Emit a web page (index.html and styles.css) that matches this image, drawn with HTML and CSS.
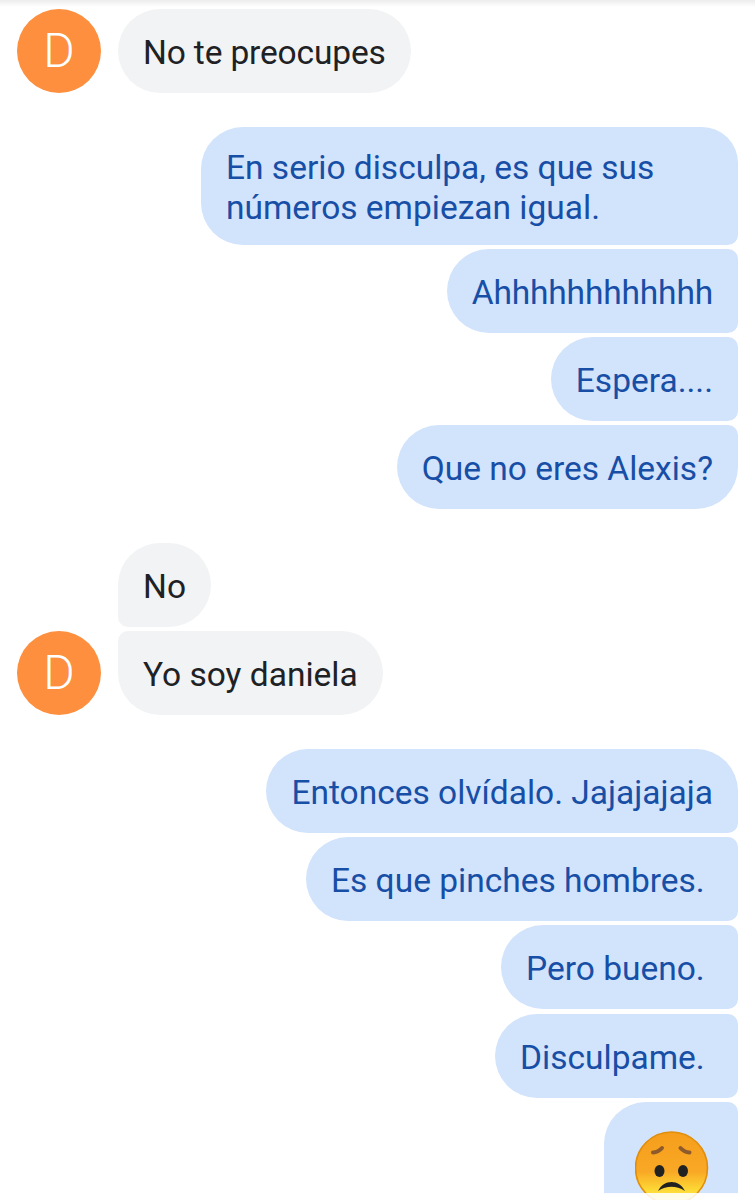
FILE: index.html
```html
<!DOCTYPE html>
<html lang="es">
<head>
    <meta charset="UTF-8">
    <meta name="viewport" content="width=device-width, initial-scale=1.0">
    <title>Mensajes</title>
    <link rel="stylesheet" href="styles.css">
</head>
<body>
    <div class="top-shadow"></div>

    <div class="chat">
        <div class="group group-in">
            <div class="row">
                <div class="avatar">D</div>
                <div class="bubble single tight">No te preocupes</div>
            </div>
        </div>

        <div class="group group-out">
            <div class="bubble first wide">En serio disculpa, es que sus números empiezan igual.</div>
            <div class="bubble middle tight">Ahhhhhhhhhhhh</div>
            <div class="bubble middle">Espera....</div>
            <div class="bubble last">Que no eres Alexis?</div>
        </div>

        <div class="group group-in">
            <div class="row">
                <div class="avatar-space"></div>
                <div class="bubble first">No</div>
            </div>
            <div class="row">
                <div class="avatar">D</div>
                <div class="bubble last">Yo soy daniela</div>
            </div>
        </div>

        <div class="group group-out">
            <div class="bubble first">Entonces olvídalo. Jajajajaja</div>
            <div class="bubble middle">Es que pinches hombres.&nbsp;</div>
            <div class="bubble middle">Pero bueno.&nbsp;</div>
            <div class="bubble middle">Disculpame.&nbsp;</div>
            <div class="bubble middle emoji-bubble">
                <svg class="emoji" viewBox="0 0 74 74" role="img" aria-label="cara triste">
                    <defs>
                        <linearGradient id="face" x1="0" y1="0" x2="0" y2="1">
                            <stop offset="0" stop-color="#f59e1c"/>
                            <stop offset="0.55" stop-color="#f9a825"/>
                            <stop offset="0.8" stop-color="#fdd835"/>
                            <stop offset="1" stop-color="#ffee58"/>
                        </linearGradient>
                    </defs>
                    <circle cx="36.5" cy="37" r="36" fill="url(#face)" stroke="#e08e0b" stroke-width="1.6"/>
                    <path d="M18 21.500c3.500-.2 6.500-1.700 9-4.500" fill="none" stroke="#8d5a2b" stroke-width="4" stroke-linecap="round"/>
                    <path d="M54.500 21.500c-3.500-.2-6.500-1.700-9-4.500" fill="none" stroke="#8d5a2b" stroke-width="4" stroke-linecap="round"/>
                    <ellipse cx="24.500" cy="40" rx="5" ry="6" fill="#212121"/>
                    <ellipse cx="48" cy="40" rx="5" ry="6" fill="#212121"/>
                    <path d="M23 60c3-6 8-9 13.500-9s10.500 3 13.500 9c-4.500-3-9-4.200-13.500-4.200s-9 1.200-13.500 4.200z" fill="#212121"/>
                </svg>
            </div>
        </div>
    </div>

    <div class="bottom-fade"></div>
</body>
</html>
```

FILE: styles.css
```css
* {
    margin: 0;
    padding: 0;
    box-sizing: border-box;
}

html, body {
    height: 1200px;
    overflow: hidden;
    background: white;
}

body {
    font-family: Roboto, 'Noto Sans', sans-serif;
    font-size: 33.5px;
    line-height: 40px;
    position: relative;
}

.top-shadow {
    position: absolute;
    top: 0;
    left: 0;
    right: 0;
    height: 7px;
    background: linear-gradient(#ececec, #ffffff);
}

.chat {
    display: flex;
    flex-direction: column;
    gap: 33.9px;
    padding: 8.7px 17px 0;
}

.group {
    display: flex;
    flex-direction: column;
    gap: 4.2px;
}

.group-out {
    align-items: flex-end;
}

.row {
    display: flex;
    align-items: flex-end;
    gap: 17px;
}

.avatar,
.avatar-space {
    width: 84px;
    height: 84px;
    flex-shrink: 0;
}

.avatar {
    border-radius: 50%;
    background: #fd8f3e;
    color: white;
    font-size: 48px;
    font-weight: 300;
    line-height: 84px;
    text-align: center;
}

.bubble {
    display: flex;
    align-items: center;
    min-height: 84px;
    padding: 21px 25px 17px;
    border-radius: 42px;
}

.tight {
    letter-spacing: -0.15px;
}

.wide {
    max-width: 537px;
}

.group-in .bubble {
    background: #f1f3f4;
    color: #202124;
}

.group-out .bubble {
    background: #d2e3fc;
    color: #174ea6;
}

.group-in .first {
    border-bottom-left-radius: 10px;
}

.group-in .last {
    border-top-left-radius: 10px;
}

.group-out .first {
    border-bottom-right-radius: 10px;
}

.group-out .wide {
    border-top-right-radius: 36px;
}

.group-out .middle {
    border-top-right-radius: 10px;
    border-bottom-right-radius: 10px;
}

.group-out .last {
    border-top-right-radius: 10px;
}

.emoji-bubble {
    display: block;
    width: 134px;
    height: 92px;
    min-height: 0;
    padding: 29px 0 0 31px;
}

.group-out .emoji-bubble {
    border-bottom-left-radius: 0;
    border-bottom-right-radius: 0;
}

.emoji {
    display: block;
    width: 74px;
    height: 74px;
}

.bottom-fade {
    position: absolute;
    top: 1193px;
    left: 0;
    right: 0;
    bottom: 0;
    background: rgba(255, 255, 255, 0.88);
}
```
